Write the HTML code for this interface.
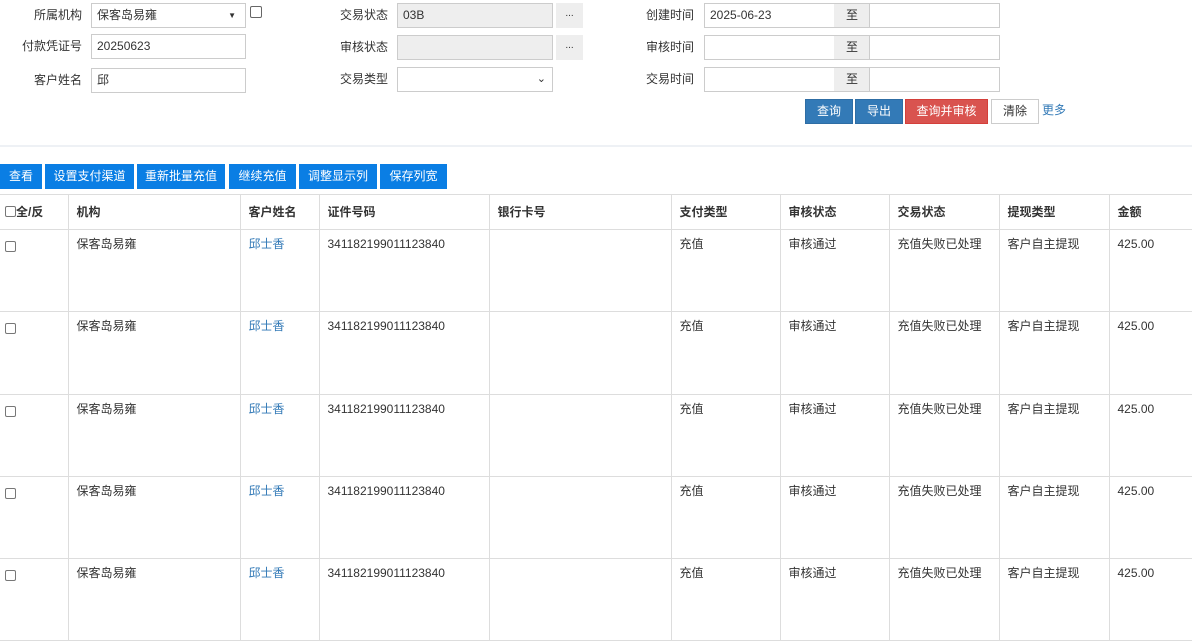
<!DOCTYPE html>
<html><head><meta charset="utf-8"><style>
*{box-sizing:border-box;margin:0;padding:0}
body{width:1192px;height:619px;overflow:hidden;background:#fff;font-family:"Liberation Sans","Microsoft YaHei","Noto Sans CJK SC",sans-serif;font-size:12px;color:#333;position:relative}
.a{position:absolute}
.lbl{position:absolute;text-align:right;font-size:12px;color:#333;line-height:24px}
.in{position:absolute;border:1px solid #ccc;background:#fff;height:25px;line-height:23px;padding-left:5px;font-size:12px}
.dis{background:#eee}
.dots{position:absolute;background:#eee;width:27px;height:25px;text-align:center;line-height:22px;font-size:10px}
.zhi{position:absolute;background:#eee;border:1px solid #ccc;border-left:none;border-right:none;width:36px;height:25px;text-align:center;line-height:23px}
.btn{position:absolute;top:99px;height:25px;line-height:23px;text-align:center;color:#fff;border:1px solid #2e6da4;background:#337ab7}
.tb{position:absolute;top:164px;height:25px;line-height:25px;text-align:center;color:#fff;background:#0a7ee4;font-size:12px}
table{position:absolute;left:0;top:194px;width:1192px;border-collapse:collapse;table-layout:fixed}
td,th{border:1px solid #ddd;vertical-align:top;text-align:left;padding:0 8px;font-size:12px}
th{height:35px;line-height:34px;font-weight:bold;color:#333}
td{line-height:28px;padding-top:0}
table tr td:first-child,table tr th:first-child{border-left:none;padding:0 5px}
table tr td:last-child,table tr th:last-child{border-right:none}
.cb{display:inline-block;width:11px;height:11px;border:1px solid #777;border-radius:2px;vertical-align:middle;margin-top:-2px}
a{color:#337ab7;text-decoration:none}
</style></head><body>
<div class="lbl" style="left:0;width:82px;top:3px">所属机构</div>
<div class="in" style="left:91px;top:3px;width:155px">保客岛易雍<span style="position:absolute;right:9px;top:0;font-size:8px">▼</span></div>
<div class="a" style="left:250px;top:6px;width:12px;height:12px;border:1px solid #666;border-radius:2px"></div>
<div class="lbl" style="left:0;width:82px;top:34px">付款凭证号</div>
<div class="in" style="left:91px;top:34px;width:155px">20250623</div>
<div class="lbl" style="left:0;width:82px;top:68px">客户姓名</div>
<div class="in" style="left:91px;top:68px;width:155px">邱</div>

<div class="lbl" style="left:300px;width:88px;top:3px">交易状态</div>
<div class="in dis" style="left:397px;top:3px;width:156px">03B</div>
<div class="dots" style="left:556px;top:3px">...</div>
<div class="lbl" style="left:300px;width:88px;top:35px">审核状态</div>
<div class="in dis" style="left:397px;top:35px;width:156px"></div>
<div class="dots" style="left:556px;top:35px">...</div>
<div class="lbl" style="left:300px;width:88px;top:67px">交易类型</div>
<div class="in" style="left:397px;top:67px;width:156px"><span style="position:absolute;right:6px;top:0;font-size:11px">&#x2304;</span></div>

<div class="lbl" style="left:600px;width:94px;top:3px">创建时间</div>
<div class="in" style="left:704px;top:3px;width:131px">2025-06-23</div>
<div class="zhi" style="left:834px;top:3px">至</div>
<div class="in" style="left:869px;top:3px;width:131px"></div>
<div class="lbl" style="left:600px;width:94px;top:35px">审核时间</div>
<div class="in" style="left:704px;top:35px;width:131px"></div>
<div class="zhi" style="left:834px;top:35px">至</div>
<div class="in" style="left:869px;top:35px;width:131px"></div>
<div class="lbl" style="left:600px;width:94px;top:67px">交易时间</div>
<div class="in" style="left:704px;top:67px;width:131px"></div>
<div class="zhi" style="left:834px;top:67px">至</div>
<div class="in" style="left:869px;top:67px;width:131px"></div>

<div class="btn" style="left:805px;width:48px">查询</div>
<div class="btn" style="left:855px;width:48px">导出</div>
<div class="btn" style="left:905px;width:83px;background:#d9534f;border-color:#d43f3a">查询并审核</div>
<div class="btn" style="left:991px;width:48px;background:#fff;color:#333;border-color:#ccc">清除</div>
<div class="a" style="left:1042px;top:99px;line-height:23px;color:#337ab7">更多</div>

<div class="a" style="left:0;top:145px;width:1192px;height:2px;background:#eef1f5"></div>

<div class="tb" style="left:0;width:42px">查看</div>
<div class="tb" style="left:45px;width:89px">设置支付渠道</div>
<div class="tb" style="left:137px;width:88px">重新批量充值</div>
<div class="tb" style="left:229px;width:67px">继续充值</div>
<div class="tb" style="left:299px;width:78px">调整显示列</div>
<div class="tb" style="left:380px;width:67px">保存列宽</div>

<table>
<colgroup><col style="width:68px"><col style="width:172px"><col style="width:79px"><col style="width:170px"><col style="width:182px"><col style="width:109px"><col style="width:109px"><col style="width:110px"><col style="width:110px"><col style="width:83px"></colgroup>
<tr><th><span class="cb" style="margin-right:0"></span>全/反</th><th>机构</th><th>客户姓名</th><th>证件号码</th><th>银行卡号</th><th>支付类型</th><th>审核状态</th><th>交易状态</th><th>提现类型</th><th>金额</th></tr>
<tr style="height:82px"><td><span class="cb" style="margin-top:4px"></span></td><td>保客岛易雍</td><td><a>邱士香</a></td><td>341182199011123840</td><td></td><td>充值</td><td>审核通过</td><td>充值失败已处理</td><td>客户自主提现</td><td>425.00</td></tr>
<tr style="height:83px"><td><span class="cb" style="margin-top:4px"></span></td><td>保客岛易雍</td><td><a>邱士香</a></td><td>341182199011123840</td><td></td><td>充值</td><td>审核通过</td><td>充值失败已处理</td><td>客户自主提现</td><td>425.00</td></tr>
<tr style="height:82px"><td><span class="cb" style="margin-top:4px"></span></td><td>保客岛易雍</td><td><a>邱士香</a></td><td>341182199011123840</td><td></td><td>充值</td><td>审核通过</td><td>充值失败已处理</td><td>客户自主提现</td><td>425.00</td></tr>
<tr style="height:82px"><td><span class="cb" style="margin-top:4px"></span></td><td>保客岛易雍</td><td><a>邱士香</a></td><td>341182199011123840</td><td></td><td>充值</td><td>审核通过</td><td>充值失败已处理</td><td>客户自主提现</td><td>425.00</td></tr>
<tr style="height:82px"><td><span class="cb" style="margin-top:4px"></span></td><td>保客岛易雍</td><td><a>邱士香</a></td><td>341182199011123840</td><td></td><td>充值</td><td>审核通过</td><td>充值失败已处理</td><td>客户自主提现</td><td>425.00</td></tr>
</table>
</body></html>
